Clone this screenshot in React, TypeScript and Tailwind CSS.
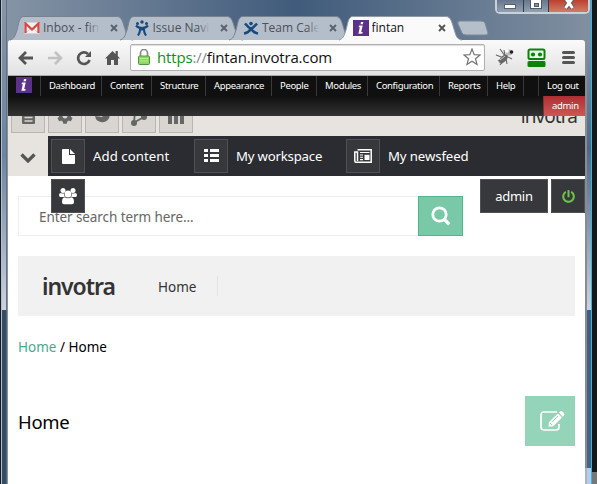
import React from 'react';
import { FaCog, FaPowerOff } from 'react-icons/fa';

const ubuntu = "font-['Noto_Sans','Open_Sans',sans-serif]";

function Close({ dark = false }: { dark?: boolean }) {
  return (
    <svg width="8" height="8" viewBox="0 0 8 8" className="shrink-0">
      <path d="M1 1L7 7M7 1L1 7" stroke={dark ? '#555' : '#59616b'} strokeWidth="1.9" />
    </svg>
  );
}

function Gmail() {
  return (
    <svg width="16" height="12" viewBox="0 0 16 12">
      <rect width="16" height="11" y=".5" rx="1" fill="#f4eeee" />
      <path d="M3 10L7 6M13 10L9 6" stroke="#ccc" />
      <path d="M1.5 11V1.5L8 7.5L14.5 1.5V11" fill="none" stroke="#d24a46" strokeWidth="2.3" />
    </svg>
  );
}

function Jira() {
  return (
    <svg width="14" height="16" viewBox="0 0 14 16" fill="none" stroke="#174a7e" strokeWidth="2.1">
      <circle cx="7" cy="2" r="1.7" fill="#174a7e" stroke="none" />
      <circle cx="2.5" cy="3.500" r="1.5" fill="#174a7e" stroke="none" />
      <circle cx="11.5" cy="3.500" r="1.5" fill="#174a7e" stroke="none" />
      <path d="M1 5.500Q3 8 7 8Q11 8 13 5.500M5 8Q5.500 12 3 15.500M9 8Q8.500 12 11 15.500M5 9.500H9" />
    </svg>
  );
}

function Confluence() {
  return (
    <svg width="16" height="15" viewBox="0 0 16 15" fill="none" stroke="#174a7e" strokeWidth="2.6">
      <path d="M2 2.500Q5 6 8 8Q11 12 15 12.5M14 2.500Q11 6 8 8Q5 12 1 12.5" />
      <circle cx="8" cy="2.6" r="1.8" fill="#174a7e" stroke="none" />
    </svg>
  );
}

function InvotraMark() {
  return (
    <svg width="16" height="16" viewBox="0 0 16 16" className="shrink-0">
      <rect width="16" height="16" fill="#5c3189" />
      <path d="M8 2h2.4l-.5 2.200H7.5zM6 5.5h3.700L8.200 12h1.5l-.4 1.8H5.4L6.800 7.200H5.6z" fill="#fff" />
    </svg>
  );
}

type TabProps = { icon: React.ReactNode; title: string; active?: boolean };

function Tab({ icon, title, active = false }: TabProps) {
  return (
    <div className={`relative flex h-6 w-[109.5px] shrink-0 items-center pl-[13px] ${active ? 'z-10' : ''}`}>
      <svg className="absolute -left-[1px] top-0" width="124" height="25" viewBox="0 0 124 25">
        <path
          d="M0 24C4 23 5 20 7 14C9 7 9 .5 14 .5H107C112 .5 113 7 115 13C117 20 118 23.500 123 24"
          fill={active ? '#fafafa' : '#b4becb'}
          stroke={active ? '#8e99a5' : '#77838f'}
        />
        {active && <path d="M2 24.500H121" stroke="#fafafa" strokeWidth="1.500" />}
      </svg>
      <span className="relative flex w-4 justify-center">{icon}</span>
      <span className={`relative ml-[3px] w-[57px] overflow-hidden whitespace-nowrap font-['Open_Sans',sans-serif] leading-[18px] ${active ? 'text-[12px] text-[#111]' : 'text-[12px] text-[#4c5057]'}`}>
        {title}
        {!active && <span className="absolute right-0 top-0 h-full w-3 bg-linear-to-r from-transparent to-[#b4becb]" />}
      </span>
      <span className={`relative ${active ? 'ml-[9px]' : 'ml-[10px]'}`}><Close dark={active} /></span>
    </div>
  );
}

function TitleBar() {
  return (
    <div className="flex h-10 justify-between">
      <div className="flex pl-[3px] pt-4">
        <Tab icon={<Gmail />} title="Inbox - fintan" />
        <Tab icon={<Jira />} title="Issue Navigator" />
        <Tab icon={<Confluence />} title="Team Calendars" />
        <Tab icon={<InvotraMark />} title="fintan" active />
        <svg width="32" height="16" viewBox="0 0 32 16" className="ml-[8px] mt-1 shrink-0">
          <path d="M3 1H24Q27 1 28 3L31 13Q31 15 29 15H9Q6 15 5 13L1 4Q0 1 3 1Z" fill="#b4bfca" stroke="#7d8996" />
        </svg>
      </div>
      <div className="absolute left-[495px] top-0 flex h-[14px] w-[95px] overflow-hidden rounded-b-[5px] border-x-2 border-b-2 border-[#c8d0da] bg-[#263240]">
        <div className="flex w-[27px] justify-center border-r border-[#303c4b] bg-linear-to-b from-[#66778b] to-[#93a2b3]">
          <span className="mt-1 h-[5px] w-3 border border-[#59616b] bg-white" />
        </div>
        <div className="flex w-[25px] justify-center border-r border-[#303c4b] bg-linear-to-b from-[#66778b] to-[#93a2b3]">
          <span className="-mt-1 flex h-[13px] w-3 items-center justify-center border border-[#505b6a] bg-white pt-1"><span className="h-1 w-[5px] border border-[#505b6a] bg-[#8090a5]" /></span>
        </div>
        <div className="flex flex-1 justify-center bg-linear-to-b from-[#b9402d] to-[#d17b68]">
          <svg width="14" height="10" viewBox="0 0 14 10"><path d="M3.500 -2L10.500 8M10.500 -2L3.500 8" stroke="#59606d" strokeWidth="4.800" /><path d="M3.500 -2L10.500 8M10.500 -2L3.500 8" stroke="#fff" strokeWidth="3" /></svg>
        </div>
      </div>
    </div>
  );
}

function BrowserToolbar() {
  return (
    <div className="flex h-9 items-center rounded-t-[3px] border-b border-[#a8aba8] bg-linear-to-b from-[#fafafa] to-[#e2e2e2] pl-[10px]">
      <svg width="16" height="14" viewBox="0 0 16 14" fill="none" stroke="#555" strokeWidth="2.800"><path d="M15 7H2M8 1L2 7L8 13" /></svg>
      <svg width="16" height="14" viewBox="0 0 16 14" className="ml-[13px]" fill="none" stroke="#c1c1c1" strokeWidth="2.600"><path d="M1 7H14M8 1L14 7L8 13" /></svg>
      <svg width="16" height="16" viewBox="0 0 16 16" className="ml-[13px]" fill="none" stroke="#555" strokeWidth="2.700"><path d="M12 4A5.800 5.800 0 1 0 13.500 10" /><path d="M15 1V7H9Z" fill="#555" stroke="none" /></svg>
      <svg width="15" height="16" viewBox="0 0 15 16" className="ml-[13px]" fill="#555"><path d="M7.500 1L0 8.500H2V15H6V10H9V15H13V8.500H15L12.800 6V1H10.600V4Z" /></svg>
      <div className="ml-[10px] mt-[-1px] flex h-[27px] w-[355px] items-center rounded-[2px] border border-[#b0b0b0] bg-white pl-[7px] pr-[3px] shadow-[inset_0_1px_1px_#ddd]">
        <svg width="12" height="16" viewBox="0 0 12 16"><path d="M2.500 8V4A3.500 3.500 0 0 1 9.500 4V8" fill="none" stroke="#8c8c8c" strokeWidth="1.700" /><rect x=".500" y="7" width="11" height="8.500" rx="1" fill="#8fd665" stroke="#4c9940" /><path d="M2 9.500H10M2 12H10" stroke="#bcee91" /></svg>
        <span className="ml-[7px] flex-1 whitespace-nowrap font-['Open_Sans',sans-serif] text-[15px] leading-5 tracking-[-0.170px] text-[#111]"><span className="text-[#0b9216]">https</span><span className="text-[#888]">://</span>fintan.invotra.com</span>
        <svg width="18" height="18" viewBox="0 0 18 18"><path d="M9 1L11.200 6.600L17 7L12.500 10.700L14 16.500L9 13.300L4 16.500L5.500 10.700L1 7L6.800 6.600Z" fill="#fff" stroke="#747474" strokeWidth="1.200" /></svg>
      </div>
      <svg width="20" height="20" viewBox="0 0 20 20" className="ml-[10px] mt-[-1px]">
        <g stroke="#666" fill="none" strokeWidth="1.100"><path d="M5 2L10 9M1 8L9 11M3 14L9 11M5 18L10 12M12 17L11 11M10 9L9 3M13 10L17 12" /></g>
        <ellipse cx="8.500" cy="12" rx="3" ry="5.500" transform="rotate(45 8.500 12)" fill="#686868" />
        <ellipse cx="14" cy="5.500" rx="3.400" ry="3" fill="#bbb" /><circle cx="12" cy="4" r="1.800" fill="#fff" /><circle cx="16.500" cy="5" r="1.800" fill="#222" />
        <path d="M5 13L10 9" stroke="#ccc" />
      </svg>
      <svg width="19" height="20" viewBox="0 0 19 20" className="ml-[12px]"><rect x="1.500" y="1.500" width="16" height="9.500" rx="1.500" fill="#e9f7e6" stroke="#0b830b" strokeWidth="2" /><circle cx="6" cy="6.500" r="2.100" fill="#0b830b" /><circle cx="13" cy="6.500" r="2.100" fill="#0b830b" /><rect x=".500" y="13" width="18" height="6" rx="1.500" fill="#0b830b" /></svg>
      <div className="ml-[16px] flex flex-col gap-[2px]">
        <span className="h-[3px] w-[13px] rounded-sm bg-[#555]" /><span className="h-[3px] w-[13px] rounded-sm bg-[#555]" /><span className="h-[3px] w-[13px] rounded-sm bg-[#555]" />
      </div>
    </div>
  );
}

const menu: [string, string][] = [
  ['Dashboard', 'w-[61px]'], ['Content', 'w-[50px]'], ['Structure', 'w-[54px]'], ['Appearance', 'w-[66px]'],
  ['People', 'w-[45px]'], ['Modules', 'w-[51px]'], ['Configuration', 'w-[72px]'], ['Reports', 'w-[48px]'], ['Help', 'w-[36px]'], ['', 'w-[15px]'], ['Log out', 'w-[47px]'],
];

function AdminMenu() {
  return (
    <div className={`flex h-10 flex-col bg-linear-to-b from-[#101010] from-50% to-[#333] text-[9.500px] leading-5 tracking-[-0.340px] text-white ${ubuntu}`}>
      <div className="flex h-5">
        <div className="w-8 pl-2 pt-px"><InvotraMark /></div>
        {menu.map(([label, width], i) => (
          <div key={i} className={`h-5 shrink-0 whitespace-nowrap border-l border-[#3a3a3a] pl-[8px] ${width}`}>{label}</div>
        ))}
      </div>
      <div className="h-5 w-[42px] self-end border-l border-[#7a3434] bg-linear-to-b from-[#ad2e32] to-[#cd5754] pl-2">admin</div>
    </div>
  );
}

function GreyStrip() {
  const box = 'flex h-[17px] w-[34px] shrink-0 items-end justify-center overflow-hidden border border-t-0 border-[#b9b6b1] bg-[#d9d6d1] text-[#666]';
  return (
    <div className="flex h-5 items-start overflow-hidden bg-[#e7e4df] pl-[3px]">
      <div className="flex gap-[3px]">
        <div className={box}><svg width="13" height="9" viewBox="0 0 13 9" className="mb-[8px] shrink-0"><path d="M0 0H13V8Q13 9 12 9H1Q0 9 0 8Z" fill="#666" /><path d="M2.500 2.500H10.500M2.500 6H10.500" stroke="#d9d6d1" strokeWidth="1.400" /></svg></div>
        <div className={box}><FaCog size={16} className="mb-[8px] shrink-0" /></div>
        <div className={box}><svg width="16" height="16" viewBox="0 0 16 16" className="mb-[8px] shrink-0"><path d="M8 9L1 8A7.500 7.500 0 0 0 15.500 9V5L11 5.500Z" fill="#666" /></svg></div>
        <div className={box}><svg width="18" height="18" viewBox="0 0 18 18" className="mb-[6px] shrink-0" fill="#666"><circle cx="4" cy="15" r="3" /><circle cx="14" cy="9" r="3" /><circle cx="6" cy="3" r="3" /><path d="M4 15L5 3M5 14L14 9M5 3L14 9" stroke="#666" strokeWidth="1.800" /></svg></div>
        <div className={box}><svg width="16" height="12" viewBox="0 0 16 12" className="mb-[8px] shrink-0" fill="#666"><path d="M0 2H4V12H0ZM6 0H10V12H6ZM12 2H16V12H12Z" /></svg></div>
      </div>
      <div className={`ml-auto -mt-[12px] mr-[8px] text-[19px] leading-6 tracking-[-0.950px] text-[#333] ${ubuntu}`}>invotra</div>
    </div>
  );
}

function IconBox({ children }: { children: React.ReactNode }) {
  return <div className="flex h-[34px] w-[34px] shrink-0 items-center justify-center border border-[#505153] bg-[#37383c] text-white">{children}</div>;
}

function ActionBar() {
  return (
    <div className="flex h-10">
      <div className="flex w-10 items-center justify-center bg-[#e7e4df]">
        <svg width="16" height="10" viewBox="0 0 16 10" className="mt-1"><path d="M1.500 1.500L8 8L14.500 1.500" fill="none" stroke="#555" strokeWidth="3.200" /></svg>
      </div>
      <div className={`flex flex-1 items-center bg-[#2b2c31] pl-[3px] text-[13.200px] text-white ${ubuntu}`}>
        <IconBox><svg width="13" height="15" viewBox="0 0 13 15" fill="#fff"><path d="M1 0H7V6H13V14Q13 15 12 15H1Q0 15 0 14V1Q0 0 1 0ZM8 0L13 5H8Z" /></svg></IconBox>
        <span className="ml-2 w-[101px] whitespace-nowrap pt-px tracking-[0.070px]">Add content</span>
        <IconBox><svg width="15" height="14" viewBox="0 0 15 14" fill="#fff"><path d="M0 0H4V3H0ZM6 0H15V3H6ZM0 5H4V8H0ZM6 5H15V8H6ZM0 10H4V13H0ZM6 10H15V13H6Z" /></svg></IconBox>
        <span className="ml-2 w-[110px] whitespace-nowrap pt-px tracking-[-0.200px]">My workspace</span>
        <IconBox>
          <svg width="18" height="14" viewBox="0 0 18 14" fill="none" stroke="#fff">
            <path d="M3.500 .800H17.200V13.200H2Q.800 13.200 .800 12V3H3.500V12" strokeWidth="1.500" />
            <path d="M6 3.500H15.500M6 6H9M6 8.300H9M6 10.600H9" strokeWidth="1.100" />
            <path d="M10.500 5.800H15.500V11H10.500Z" fill="#fff" stroke="none" />
          </svg>
        </IconBox>
        <span className="ml-2 whitespace-nowrap pt-px tracking-[-0.100px]">My newsfeed</span>
      </div>
    </div>
  );
}

function UsersIcon() {
  return (
    <svg width="18" height="17" viewBox="0 0 18 17" fill="#fff">
      <circle cx="4" cy="2.600" r="2.500" /><circle cx="14" cy="2.600" r="2.500" />
      <path d="M0 7Q0 5 2 5Q3.500 6 5 5.200Q4.600 7 5.800 9H1.500Q0 9 0 7ZM18 7Q18 5 16 5Q14.500 6 13 5.200Q13.400 7 12.200 9H16.500Q18 9 18 7Z" />
      <circle cx="9" cy="6" r="3.500" />
      <path d="M3 14Q3 9.500 5.800 9.200Q9 11.300 12.200 9.200Q15 9.500 15 14Q15 16.200 13 16.200H5Q3 16.200 3 14Z" />
    </svg>
  );
}

function Page() {
  return (
    <div className={`relative h-[308px] bg-white pl-[10px] pr-[10px] pt-5 ${ubuntu}`}>
      <div className="flex h-10 w-[445px]">
        <div className="flex flex-1 items-center border border-r-0 border-[#efefef] pl-5 pt-[2px] text-[13.500px] tracking-[-0.080px] text-[#666]">Enter search term here...</div>
        <div className="flex w-[45px] items-center justify-center border border-[#4dba8b] bg-[#79c9a8]">
          <svg width="20" height="20" viewBox="0 0 20 20" fill="none" stroke="#fff"><circle cx="8.500" cy="8.500" r="6.700" strokeWidth="2.800" /><path d="M13 13L18.300 18.300" strokeWidth="3.200" /></svg>
        </div>
      </div>
      <div className="absolute left-[43px] top-[3px]"><IconBox><UsersIcon /></IconBox></div>
      <div className="absolute right-0 top-[3px] flex gap-[3px]">
        <div className="flex h-[34px] w-[68px] items-center justify-center border border-[#505153] bg-[#37383c] pt-[2px] text-[13px] tracking-[-0.300px] text-white">admin</div>
        <IconBox><FaPowerOff size={13} className="text-[#6fc14d]" /></IconBox>
      </div>
      <div className="mt-5 flex h-[60px] items-center bg-[#f1f1f1] pl-6">
        <span className="w-[116px] text-[23px] font-semibold leading-7 tracking-[-1.050px] text-[#333]">invotra</span>
        <span className="flex h-5 w-[60px] items-center border-r border-[#e4e4e4] pt-[2px] text-[13.500px] text-[#333]">Home</span>
      </div>
      <div className="mt-[21px] text-[13.500px] leading-5 text-black"><span className="text-[#49a98c]">Home</span> / Home</div>
      <div className="mt-[39px] flex h-[50px] items-center justify-between">
        <h1 className="pt-[1px] text-[18.500px] tracking-[-0.300px] text-black">Home</h1>
        <div className="flex h-[50px] w-[50px] items-center justify-center bg-[#94d4b9] pb-px pl-[4px]">
          <svg width="25" height="21" viewBox="0 0 25 21" fill="none" stroke="#fff"><path d="M17 2H4Q1 2 1 5V17Q1 20 4 20H16Q19 20 19 17V14" strokeWidth="1.700" /><path d="M8.500 16.800L9 12L18 3.500L22 7.500L13 16.500Z" fill="#fff" stroke="none" /><path d="M19 2.500L20.500 1Q21.500 .500 23 2L24 3.500Q25 4.500 24 5.500L22.700 6.700Z" fill="#fff" stroke="none" /><path d="M10 13L12 15M12 12L18 6" stroke="#94d4b9" /></svg>
        </div>
      </div>
    </div>
  );
}

export default function App() {
  return (
    <div className="relative flex h-[484px] w-[597px] overflow-hidden bg-[#161719]">
      <div className="flex h-full w-[592px] border-l border-[#111c2a] bg-linear-to-r from-[#8795a6] via-[#405b7b] to-[#8190a1]">
        <div className="flex w-[6px] shrink-0 flex-col border-l border-[#b5bec8]">
          <div className="h-[310px] border-r border-[#637181] bg-linear-to-b from-[#8795a6] via-[#6d84a0] via-50% to-[#cfd2dc]" />
          <div className="flex-1 border-r border-[#52657a] bg-[#344c66]" />
        </div>
        <main className="ml-px w-[577px] shrink-0">
          <TitleBar />
          <BrowserToolbar />
          <AdminMenu />
          <GreyStrip />
          <ActionBar />
          <Page />
        </main>
        <div className="flex flex-1 flex-col border-r border-r-[#28bbea]">
          <div className="h-10" />
          <div className="h-[270px] border-l-2 border-[#858e98] bg-linear-to-b from-[#8391a2] via-[#52677e] via-40% to-[#cfd2dc]" />
          <div className="flex-1 border-l-2 border-[#858e98] bg-linear-to-b from-[#435d7b] to-[#4b6280]" />
          <div className="h-4 border-l-2 border-[#aeb4bb] bg-[#b8cbeb]" />
        </div>
      </div>
      <div className="mt-[472px] h-3 flex-1 bg-[#777]" />
    </div>
  );
}
